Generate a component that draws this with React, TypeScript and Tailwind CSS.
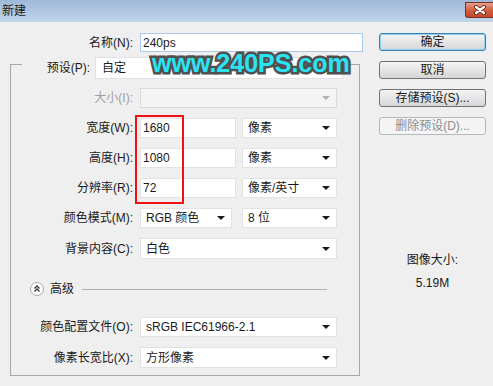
import React from "react";

const Arrow = ({ disabled }: { disabled?: boolean }) => (
  <span
    className={`w-0 h-0 border-l-[4px] border-r-[4px] border-t-[4px] border-l-transparent border-r-transparent ${
      disabled ? "border-t-[#b0b0b0]" : "border-t-[#1a1a1a]"
    }`}
  />
);

const Select = ({ value, className = "", disabled }: { value: string; className?: string; disabled?: boolean }) => (
  <div
    className={`h-full flex items-center justify-between pl-[5px] pr-[6px] border ${
      disabled ? "bg-[#f4f4f4] border-[#dadada]" : "bg-white border-[#e2e2e2]"
    } ${className}`}
  >
    <span className="whitespace-nowrap">{value}</span>
    <Arrow disabled={disabled} />
  </div>
);

const Input = ({ value, className = "" }: { value: string; className?: string }) => (
  <div className={`h-full flex items-center pl-[2px] bg-white border border-[#e2e2e2] ${className}`}>{value}</div>
);

const Label = ({ text, disabled }: { text: string; disabled?: boolean }) => (
  <span className={`w-[122px] text-right whitespace-nowrap ${disabled ? "text-[#a0a0a0]" : ""}`}>{text}</span>
);

const Button = ({ text, primary, disabled }: { text: string; primary?: boolean; disabled?: boolean }) => {
  let cls = "border-[#707070] bg-gradient-to-b from-[#f5f5f5] to-[#d6d6d6]";
  if (primary) cls = "border-[#3c7fb1] bg-gradient-to-b from-[#f5f5f5] to-[#d6d6d6] shadow-[inset_0_0_0_1px_#8fd0f3]";
  if (disabled) cls = "border-[#b5b9bc] bg-[#f4f4f4] text-[#8c8c8c]";
  return (
    <div className={`h-[18px] rounded-[3px] border flex items-center justify-center whitespace-nowrap ${cls}`}>
      {text}
    </div>
  );
};

export default function App() {
  return (
    <div className="relative w-[493px] h-[386px] overflow-hidden bg-[#efefef] font-['Liberation_Sans','Noto_Sans_CJK_SC',sans-serif] text-[12px] text-[#1a1a1a]">
      {/* title bar */}
      <div className="h-[22px] flex items-start bg-gradient-to-b from-[#9db8d8] to-[#c1d5ea]">
        <span className="pl-[2px] leading-[22px]">新建</span>
        <div className="ml-auto mt-[2px] w-[28px] h-[16px] rounded-bl-[3px] border border-r-0 border-[#7a3424] bg-gradient-to-b from-[#e7a08c] via-[#d3603f] to-[#c4452a] flex items-center justify-center">
          <svg width="14" height="10" viewBox="0 0 14 10">
            <path d="M3 2 L11 8 M11 2 L3 8" stroke="#5a2418" strokeWidth="4" strokeLinecap="round" />
            <path d="M3 2 L11 8 M11 2 L3 8" stroke="#ffffff" strokeWidth="2.2" strokeLinecap="round" />
          </svg>
        </div>
      </div>

      <div className="flex">
        {/* left column */}
        <div className="w-[372px]">
          <div className="mt-[11px] h-[19px] flex items-center">
            <span className="w-[133px] text-right">名称(N):</span>
            <div className="ml-[7px] w-[223px] h-full flex items-center pl-[2px] bg-white border border-[#a9c9e8]">240ps</div>
          </div>

          <div className="mt-[12px] ml-[10px] w-[350px] border border-[#a8a8a8] pb-[7px]">
            <div className="-mt-[8px] h-[22px] flex items-center">
              <span className="ml-[11px] w-[73px] h-full flex items-center justify-end pr-[5px] bg-[#efefef]">预设(P):</span>
              <Select value="自定" className="w-[248px] pl-[6px]" />
            </div>
            <div className="mt-[9px] h-[20px] flex items-center">
              <Label text="大小(I):" disabled />
              <Select value="" className="ml-[7px] w-[197px]" disabled />
            </div>
            <div className="mt-[10px] h-[20px] flex items-center">
              <Label text="宽度(W):" />
              <Input value="1680" className="ml-[7px] w-[96px]" />
              <Select value="像素" className="ml-[6px] w-[95px]" />
            </div>
            <div className="mt-[10px] h-[20px] flex items-center">
              <Label text="高度(H):" />
              <Input value="1080" className="ml-[7px] w-[96px]" />
              <Select value="像素" className="ml-[6px] w-[95px]" />
            </div>
            <div className="mt-[10px] h-[20px] flex items-center">
              <Label text="分辨率(R):" />
              <Input value="72" className="ml-[7px] w-[96px]" />
              <Select value="像素/英寸" className="ml-[6px] w-[95px]" />
            </div>
            <div className="mt-[10px] h-[20px] flex items-center">
              <Label text="颜色模式(M):" />
              <Select value="RGB 颜色" className="ml-[7px] w-[92px]" />
              <Select value="8 位" className="ml-[10px] w-[95px]" />
            </div>
            <div className="mt-[10px] h-[21px] flex items-center">
              <Label text="背景内容(C):" />
              <Select value="白色" className="ml-[7px] w-[197px]" />
            </div>
            <div className="mt-[23px] h-[14px] flex items-center">
              <svg className="ml-[19px]" width="14" height="14" viewBox="0 0 14 14">
                <circle cx="7" cy="7" r="6.5" fill="#ffffff" stroke="#a8a8a8" />
                <path d="M4.5 6.5 L7 4 L9.5 6.5 M4.5 9.5 L7 7 L9.5 9.5" fill="none" stroke="#333333" strokeWidth="1.3" />
              </svg>
              <span className="ml-[6px]">高级</span>
              <div className="ml-[8px] w-[245px] h-px bg-[#b0b0b0]" />
            </div>
            <div className="mt-[21px] h-[20px] flex items-center">
              <Label text="颜色配置文件(O):" />
              <Select value="sRGB IEC61966-2.1" className="ml-[7px] w-[197px]" />
            </div>
            <div className="mt-[10px] h-[21px] flex items-center">
              <Label text="像素长宽比(X):" />
              <Select value="方形像素" className="ml-[7px] w-[197px]" />
            </div>
          </div>
        </div>

        {/* right column */}
        <div className="ml-[7px] w-[107px] pt-[11px] flex flex-col">
          <div className="flex flex-col gap-[10px]">
            <Button text="确定" primary />
            <Button text="取消" />
            <Button text="存储预设(S)..." />
            <Button text="删除预设(D)..." disabled />
          </div>
          <div className="mt-[118px] text-center leading-[14px]">图像大小:</div>
          <div className="mt-[9px] text-center leading-[14px]">5.19M</div>
        </div>
      </div>

      {/* annotation */}
      <div className="absolute left-[135px] top-[115px] w-[49px] h-[89px] border-2 border-[#ee1111]" />
      <div className="absolute left-[152px] top-[51px] leading-none text-[25px] font-bold text-[#2ae4f4] [-webkit-text-stroke:5px_#505050] [paint-order:stroke_fill] font-['Liberation_Sans',sans-serif]">
        www.240PS.com
      </div>
    </div>
  );
}
